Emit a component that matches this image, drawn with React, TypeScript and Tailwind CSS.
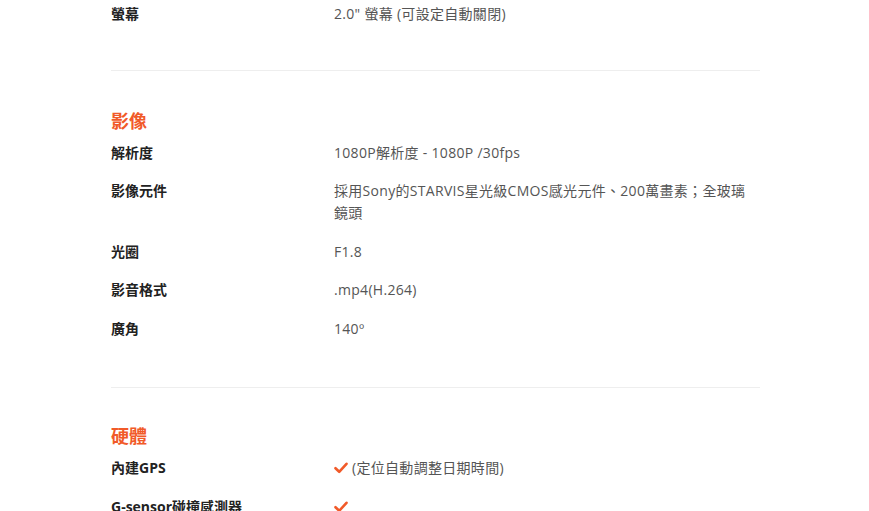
import React from "react";

const font = { fontFamily: '"Open Sans", "Noto Sans CJK TC", sans-serif' };

function Check() {
  return (
    <svg width="14" height="12" viewBox="0 0 14 12" className="inline-block mr-[4px] align-[-1px]">
      <path d="M1.5 6.2 L5.2 9.8 L12.5 1.8" fill="none" stroke="#f15a29" strokeWidth="2.6" strokeLinecap="round" strokeLinejoin="round" />
    </svg>
  );
}

type Row = { label: string; value: React.ReactNode };

function Rows({ rows }: { rows: Row[] }) {
  return (
    <div className="flex flex-col">
      {rows.map((r, i) => (
        <div key={i} className="flex py-[8.25px] text-[14px] leading-[22px]">
          <div className="w-[223px] shrink-0 font-bold text-[#222]">{r.label}</div>
          <div className="w-[420px] text-[#555] tracking-[0.3px]">{r.value}</div>
        </div>
      ))}
    </div>
  );
}

function Heading({ children }: { children: React.ReactNode }) {
  return <div className="text-[18px] leading-[26px] font-bold text-[#f15a29]">{children}</div>;
}

export default function App() {
  return (
    <div className="w-[869px] h-[511px] overflow-hidden bg-white" style={font}>
      <div className="ml-[111px] w-[649px] -mt-[5px]">
        <Rows rows={[{ label: "螢幕", value: '2.0" 螢幕 (可設定自動關閉)' }]} />
        <div className="h-[36px]" />
        <div className="h-px bg-[#eeeeee]" />
        <div className="pt-[37px]">
          <Heading>影像</Heading>
          <Rows
            rows={[
              { label: "解析度", value: "1080P解析度 - 1080P /30fps" },
              { label: "影像元件", value: "採用Sony的STARVIS星光級CMOS感光元件、200萬畫素；全玻璃鏡頭" },
              { label: "光圈", value: "F1.8" },
              { label: "影音格式", value: ".mp4(H.264)" },
              { label: "廣角", value: "140º" },
            ]}
          />
        </div>
        <div className="h-[39px]" />
        <div className="h-px bg-[#eeeeee]" />
        <div className="pt-[35px]">
          <Heading>硬體</Heading>
          <Rows
            rows={[
              { label: "內建GPS", value: <><Check />(定位自動調整日期時間)</> },
              { label: "G-sensor碰撞感測器", value: <Check /> },
            ]}
          />
        </div>
      </div>
    </div>
  );
}
